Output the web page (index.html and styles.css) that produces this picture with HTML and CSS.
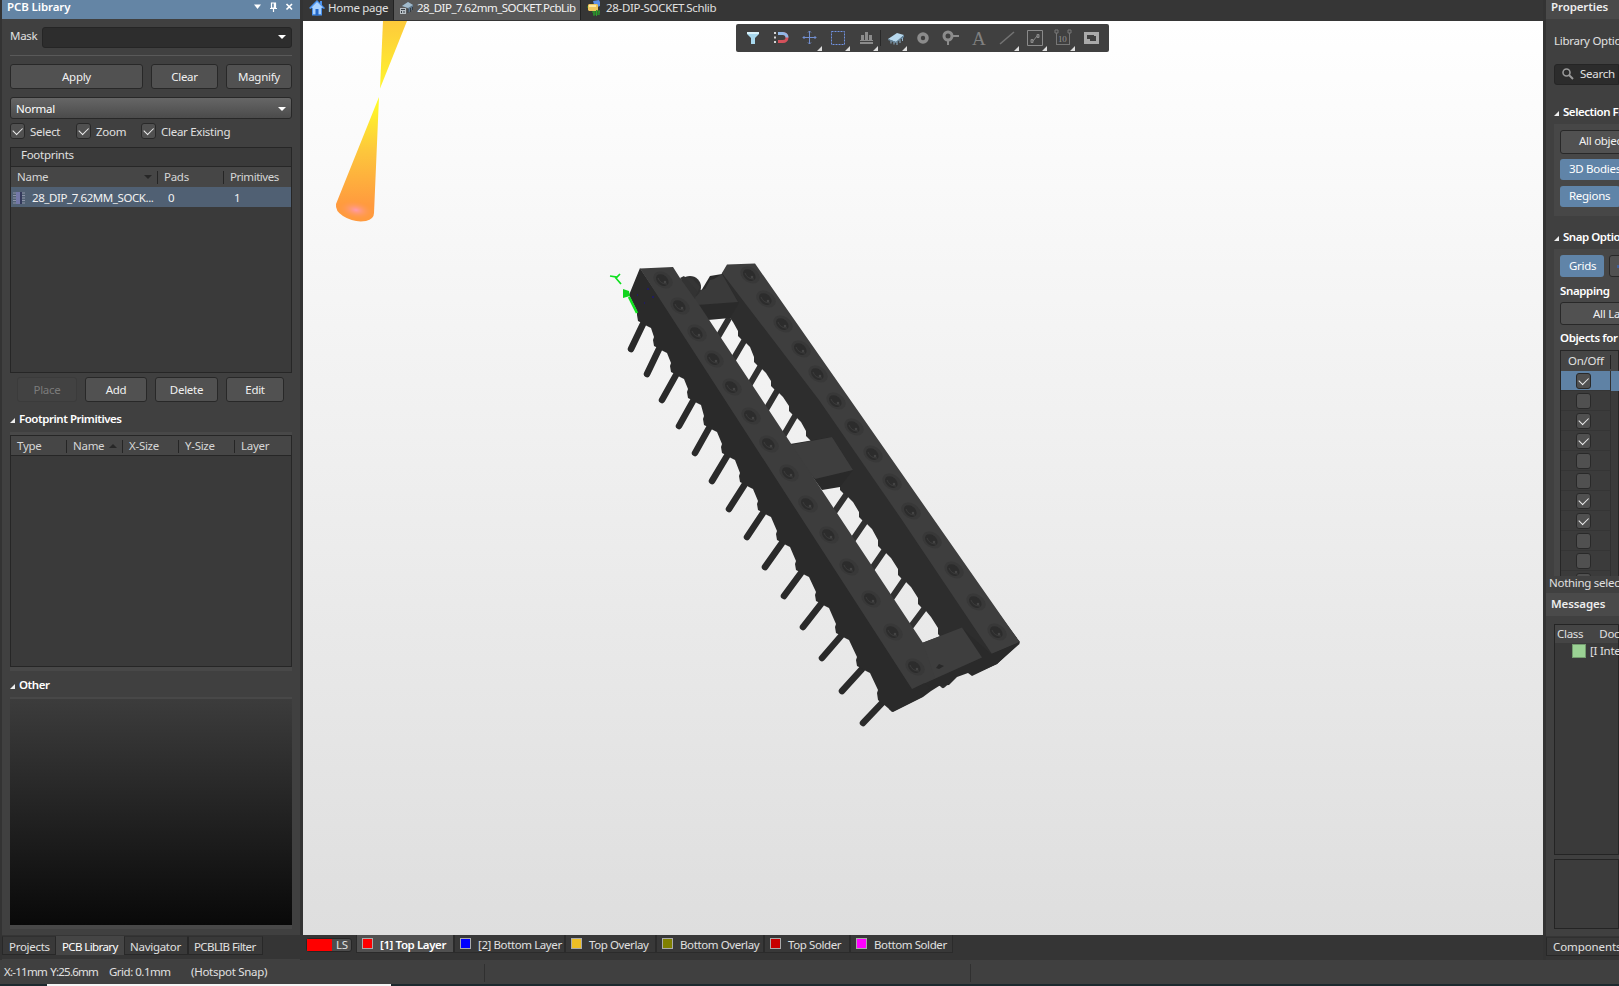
FILE: index.html
```
<!DOCTYPE html>
<html lang="en">
<head>
<meta charset="utf-8">
<title>PCB Library</title>
<link rel="stylesheet" href="styles.css">
</head>
<body>
<div class="app">
<div class="workspace">
  <aside class="library">
    <header class="panel-title active"><span class="grow">PCB Library</span>
      <svg width="39" height="12" viewBox="0 0 39 12"><path d="M0 3.500h7L3.500 8z" fill="#fff"/><path d="M17.500 2h4v5h-4zM16 7.500h7M19.500 7.500v3.500" fill="none" stroke="#fff" stroke-width="1.200"/><path d="M20.500 2v5" stroke="#fff" stroke-width="1.500"/><path d="M32.500 3l5.500 5.500M38 3l-5.500 5.500" stroke="#fff" stroke-width="1.700"/></svg>
    </header>
    <div class="mask-row"><span>Mask</span><div class="mask-input"><i class="arrow"></i></div></div>
    <div class="buttons main-buttons"><div class="btn">Apply</div><div class="btn">Clear</div><div class="btn">Magnify</div></div>
    <div class="combo"><span class="grow">Normal</span><i class="arrow"></i></div>
    <div class="checks">
      <span class="check on"></span><span class="l1">Select</span>
      <span class="check on"></span><span class="l2">Zoom</span>
      <span class="check on"></span><span>Clear Existing</span>
    </div>
    <div class="table footprints">
      <div class="caption">Footprints</div>
      <div class="thead fp-cols"><span>Name<i class="sort"></i></span><span>Pads</span><span>Primitives</span></div>
      <div class="trow fp-cols"><span class="fp-name"><svg width="12" height="14" viewBox="0 0 12 14"><path d="M0 2h3M0 4.500h3M0 7h3M0 9.500h3M0 12h3M9 2h3M9 4.500h3M9 7h3M9 9.500h3M9 12h3" stroke="#8c93a8"/><path d="M3 1h5v12H3z" fill="#7478a8"/><path d="M7 1h2v12H7z" fill="#343a5c"/></svg>28_DIP_7.62MM_SOCK...</span><span>0</span><span>1</span></div>
    </div>
    <div class="buttons edit-buttons"><div class="btn off">Place</div><div class="btn">Add</div><div class="btn">Delete</div><div class="btn">Edit</div></div>
    <h2 class="section s-prim"><i class="tri"></i>Footprint Primitives</h2>
    <div class="table primitives"><div class="thead pr-cols"><span>Type</span><span>Name<i class="sort up"></i></span><span>X-Size</span><span>Y-Size</span><span>Layer</span></div></div>
    <h2 class="section s-other"><i class="tri"></i>Other</h2>
    <div class="preview"></div>
    <nav class="panel-tabs"><span>Projects</span><span class="current">PCB Library</span><span>Navigator</span><span>PCBLIB Filter</span></nav>
  </aside>

  <main class="editor">
    <nav class="doc-tabs">
      <span class="doc"><svg width="16" height="16" viewBox="0 0 16 16"><path d="M8 0L0 8l1.500 1L3 8v7.500h10V8l2 1 1-1-3-3V1h-2v2z" fill="#4b93ee"/><path d="M8 2L2.500 7.500 4 8v6h8V8l2-.5z" fill="#a9d2ff"/><path d="M6.500 9h3v6.500h-3z" fill="#2468c9"/></svg>Home page</span>
      <span class="doc current"><svg width="14" height="14" viewBox="0 0 14 14"><path d="M2 5l6-4 5 3v4l-5 4V7z" fill="#5b7388"/><path d="M2 5l6-4 5 3-5 3z" fill="#a1bacb"/><path d="M0 7h6v6H0z" fill="#b8bfc4"/><path d="M1 8.500h4M1.500 10v2M4 10v2M8 8v4M10.500 7v4M12.500 6v3" stroke="#343b42"/></svg>28_DIP_7.62mm_SOCKET.PcbLib</span>
      <span class="doc"><svg width="14" height="16" viewBox="0 0 14 16"><path d="M6 1l6-1 1 2v4l-5 2z" fill="#5b8fe8"/><path d="M2 4h8l1 1v5l-1 1H2L1 10V5z" fill="#efc65c"/><path d="M2 5h7v2H2z" fill="#ffe7a0"/><path d="M5 12h8M6 14h6M7 11v5M9.500 10v6M12 10v5M0 7h1" stroke="#2ba32b"/></svg>28-DIP-SOCKET.Schlib</span>
    </nav>
    <div class="viewport">
      <svg class="scene" viewBox="303 21 1240 914">
        <defs>
          <linearGradient id="bg" x1="0" y1="0" x2="0" y2="1"><stop offset="0" stop-color="#fff"/><stop offset="1" stop-color="#dedede"/></linearGradient>
          <linearGradient id="c1" gradientUnits="userSpaceOnUse" x1="0" y1="21" x2="0" y2="88"><stop offset="0" stop-color="#fdca3b"/><stop offset="1" stop-color="#fff42e"/></linearGradient>
          <linearGradient id="c2" gradientUnits="userSpaceOnUse" x1="0" y1="98" x2="0" y2="205"><stop offset="0" stop-color="#ffff26"/><stop offset=".5" stop-color="#fdc63c"/><stop offset="1" stop-color="#ff9a3e"/></linearGradient>
          <radialGradient id="c3"><stop offset="0" stop-color="#ff9aae"/><stop offset="1" stop-color="#ff9a4a" stop-opacity="0"/></radialGradient>
          <g id="h"><ellipse rx="10.500" ry="7.500" fill="#383838" transform="rotate(32)"/><ellipse cx="-.5" cy=".5" rx="7" ry="5" fill="#2c2c2c" transform="rotate(40)"/><path d="M-5-2Q-3 4 4 4" stroke="#3d3d3d" fill="none"/><circle cx="2" cy="2" r="1.300" fill="#444"/></g>
        </defs>
        <path d="M303 21h1240v914H303z" fill="url(#bg)"/>
        <path d="M383 21h24L380 88.500z" fill="url(#c1)"/>
        <path d="M379 97L336 204q-1 7 7 12 11 7 23 5 8-2 8-8z" fill="url(#c2)"/>
        <ellipse cx="356" cy="210" rx="17" ry="9" fill="url(#c3)" transform="rotate(10 356 210)"/>
        <!-- Pins under the far rail -->
        <path d="M728 320l-20 34M744 341l-20 34M760 367l-20 34M777 391l-20 34M795 416l-20 34M846 495l-22 32M865 522l-22 32M884 551l-22 32M904 580l-22 32M924 609l-24 32M954 674l-11 11" stroke="#303030" stroke-width="6" stroke-linecap="round"/>
        <!-- Far rail side and top -->
        <path d="M722 273L708 308l16 8 6 2 3 4 5 9v5l4 4 4 3 4 4 4 10v5l4 4 4 3 4 4 5 8v5l4 4 4 3 4 4 6 9v5l4 4 4 3 4 4 5 9v5l4 4L822 459 840 485v5l4 4 4 3 5 5 6 10v5l4 4 4 3 5 5 6 11v6l4 4 4 3 5 5 7 11v6l4 4 4 3 5 5 7 11v6l4 4 4 3 5 6 7 11v6l34 41 25-11 23-22L740 266z" fill="#2d2d2d"/>
        <path d="M722 273l5-8.500 28-1L1019.500 642 992 654 900 517 819 400z" fill="#3e3e3e"/>
        <!-- Cross bars -->
        <path d="M701 291l9-15 12-2 17 29-9 15-22 2-12-18z" fill="#2a2a2a"/><path d="M700 290l5-1 5-9 4-1 8-5 16 28-41 3-8-9z" fill="#3a3a3a"/>
        <path d="M790 444l42-7 21 33-13 17-18 3-8-11z" fill="#292929"/><path d="M790 445l42-8 21 33-38 9-30-32z" fill="#3e3e3e"/>
        <path d="M922 643l40-15 29 26 28.500-12v2L997 664l-25 12-4-3-11 4-8 8-10 1-8 5-8 6-30 15-4-3 22-42z" fill="#2a2a2a"/><path d="M922 643l40-15.500 20 30L912 689l-15-26z" fill="#3e3e3e"/><path d="M936 668l3-4 5 2-5 3z" fill="#292929"/>
        <circle cx="690" cy="287" r="11" fill="#303030"/><path d="M683 279q5-3 10 0l7 8-4 8z" fill="#353535"/>
        <!-- Pins of the near rail -->
        <path d="M643 324l-12 25M659 349l-12 25M676 375l-14 25M693 401l-14 25M709 428l-14 25M727 456l-15 25M745 484l-16 25M763 513l-16 24M782 543l-17 24M801 573l-17 23M821 604l-18 23M841 636l-19 22M862 669l-20 22M883 702l-20 21" stroke="#2a2a2a" stroke-width="6.500" stroke-linecap="round"/>
        <!-- Near rail side with scalloped foot -->
        <path d="M640 268L629 295l8 16 0 4 1 6 4 2 5 3 4 2L654 337l-1 3 1 6 4 2 5 3 4 2L671 363l-1 3 1 6 4 2 5 3 4 2L688 389l-1 3 1 6 4 2 5 3 4 2L704 416l-1 3 1 6 4 2 5 3 4 2L722 444l-1 3 1 6 4 2 5 3 4 2L740 473l-1 3 1 6 4 2 5 3 4 2L758 501l-1 3 1 6 4 2 5 3 4 2L777 531l-1 3 1 6 4 2 5 3 4 2L796 561l-1 3 1 6 4 2 5 3 4 2L816 592l-1 3 1 6 4 2 5 3 4 2L836 624l-1 3 1 6 4 2 5 3 4 2L857 657l-1 3 1 6 4 2 5 3 4 2L878 690l-1 3 1 7 4 3 6 5 4 4 30-15 8-10-17-11z" fill="#2a2a2a"/>
        <path d="M640 268.500l33-1.500 7 11 6 7L923 643l12 35-23 11z" fill="#3d3d3d"/><path d="M680 278l4-2 13 15-2 8z" fill="#333"/>
        <use href="#h" x="663" y="280"/><use href="#h" x="680" y="306"/><use href="#h" x="697" y="333"/><use href="#h" x="714" y="359"/><use href="#h" x="732" y="387"/><use href="#h" x="751" y="416"/><use href="#h" x="769" y="444"/><use href="#h" x="789" y="473"/><use href="#h" x="808" y="504"/><use href="#h" x="829" y="535"/><use href="#h" x="849" y="567"/><use href="#h" x="871" y="599"/><use href="#h" x="893" y="632"/><use href="#h" x="915" y="667"/>
        <use href="#h" x="750" y="275"/><use href="#h" x="766" y="299"/><use href="#h" x="783" y="324"/><use href="#h" x="801" y="349"/><use href="#h" x="818" y="374"/><use href="#h" x="836" y="401"/><use href="#h" x="854" y="427"/><use href="#h" x="873" y="454"/><use href="#h" x="892" y="482"/><use href="#h" x="911" y="511"/><use href="#h" x="932" y="540"/><use href="#h" x="954" y="570"/><use href="#h" x="976" y="602"/><use href="#h" x="997" y="632"/>
        <!-- Y axis marker -->
        <path d="M610 276l7 1 3-3M615 277l6 7" stroke="#0fe01f" stroke-width="1.700" fill="none"/><path d="M623 289l6 2 1 5-7 2z" fill="#10d41c"/><path d="M629 297l8 16" stroke="#10e61e" stroke-width="2.500"/><path d="M647 289h2M652 297h2M637 295h1M644 303h1" stroke="#201c60" stroke-width="2"/>
      </svg>
      <div class="toolbar">
        <svg width="373" height="28" viewBox="0 0 373 28">
          <path d="M11 8h12v2l-4 4v6h-4v-6l-4-4z" fill="#a8d8ee"/><path d="M11 8h12v2H11z" fill="#d9f1fb"/>
          <path d="M42 9.500h5a4 4 0 010 8h-5" fill="none" stroke="#d4515b" stroke-width="3"/><path d="M42 9.500h5a4 4 0 014 4" fill="none" stroke="#91b7e6" stroke-width="3"/><path d="M39 8v2M39 12.500v2M39 17v2" stroke="#d6d6d6" stroke-width="2"/>
          <path d="M67 13.500h13M73.500 7v13" stroke="#728fd1"/><path d="M72 8.500l1.500-1.500L75 8.500M72 18.500l1.500 1.500 1.500-1.500M68.500 12L67 13.500l1.500 1.500M78.500 12l1.500 1.500-1.500 1.500" stroke="#728fd1" fill="none"/>
          <path d="M95.500 7.500h13v13h-13z" fill="none" stroke="#7193e2" stroke-dasharray="2 1"/>
          <path d="M124 19h13" stroke="#8b8b8b" stroke-width="2"/><path d="M125 11h3v6h-3zM129 8h3v9h-3zM133 11h3v6h-3z" fill="#8b8b8b"/><path d="M124 16.500h13" stroke="#8b8b8b"/>
          <path d="M144.500 6v16" stroke="#282828"/>
          <path d="M152 15l9-6 7 2-8 7z" fill="#b7d8ed"/><path d="M152 15l8 3 8-7v2l-8 6-8-3z" fill="#6588a2"/><path d="M155 17v2.500M158 18v2.500M161 18v3M164 16v3M166.500 14v3" stroke="#8fb0c8"/>
          <circle cx="187" cy="14" r="4" fill="none" stroke="#8c8c8c" stroke-width="3.600"/>
          <circle cx="212" cy="12" r="4" fill="none" stroke="#8c8c8c" stroke-width="3"/><path d="M216 12h7M212 16v5" stroke="#8c8c8c" stroke-width="2"/>
          <path d="M264 20l14-12" stroke="#737373" stroke-width="1.600"/>
          <path d="M291.500 6.500h15v15h-15z" fill="none" stroke="#8a8a8a"/><path d="M295 17h2l4-5h2M295 15.500h2v3h-2zM301 10.500h2v3h-2z" fill="none" stroke="#8a8a8a"/>
          <path d="M320.500 9v12M333.500 9v12" stroke="#777"/><path d="M320.500 20.500h13" stroke="#777"/><path d="M319 6h3v3h-3zM332 6h3v3h-3z" fill="none" stroke="#777"/>
          <path d="M349.500 9.500h12v9h-12z" fill="none" stroke="#aaa" stroke-width="3"/><path d="M350 15h4v4h-4zM358 9h4v3h-4z" fill="#aaa"/>
          <path d="M86 22v5h-5zM114 22v5h-5zM142 22v5h-5zM171 22v5h-5zM283 22v5h-5zM311 22v5h-5zM339 22v5h-5z" fill="#ddd"/>
          <text class="glyph-a" x="236" y="21">A</text><text class="glyph-n" x="322" y="18">10</text>
        </svg>
      </div>
    </div>
    <nav class="layers">
      <span class="ls"><i></i><b>LS</b></span>
      <span class="layer current w1"><i class="sw red"></i>[1] Top Layer</span>
      <span class="layer w2"><i class="sw blue"></i>[2] Bottom Layer</span>
      <span class="layer w3"><i class="sw gold"></i>Top Overlay</span>
      <span class="layer w4"><i class="sw olive"></i>Bottom Overlay</span>
      <span class="layer w5"><i class="sw dred"></i>Top Solder</span>
      <span class="layer w6"><i class="sw mag"></i>Bottom Solder</span>
    </nav>
  </main>

  <aside class="properties">
    <header class="panel-title">Properties</header>
    <div class="lib-options">Library Options</div>
    <div class="search"><svg width="12" height="12" viewBox="0 0 12 12"><circle cx="4.500" cy="4.500" r="3.500" fill="none" stroke="#999" stroke-width="1.600"/><path d="M7 7l4 4" stroke="#999" stroke-width="2"/></svg>Search</div>
    <h2 class="section s-filter"><i class="tri"></i>Selection Filter</h2>
    <div class="group filter"><div class="btn all">All objects</div><div class="chip">3D Bodies</div><div class="chip">Regions</div></div>
    <h2 class="section s-snap"><i class="tri"></i>Snap Options</h2>
    <div class="group snap">
      <div class="snap-row"><div class="chip grids">Grids</div><div class="btn guides"><i></i></div></div>
      <strong>Snapping</strong>
      <div class="btn layers-all">All Layers</div>
      <strong class="objects">Objects for snapping</strong>
      <div class="snap-table">
        <div class="snap-head"><span>On/Off</span><i></i></div>
        <div class="snap-line sel"><i class="check on"></i></div><div class="snap-line"><i class="check"></i></div><div class="snap-line"><i class="check on"></i></div><div class="snap-line"><i class="check on"></i></div><div class="snap-line"><i class="check"></i></div><div class="snap-line"><i class="check"></i></div><div class="snap-line"><i class="check on"></i></div><div class="snap-line"><i class="check on"></i></div><div class="snap-line"><i class="check"></i></div><div class="snap-line"><i class="check"></i></div><div class="snap-line"><i class="check"></i></div>
      </div>
    </div>
    <div class="nothing">Nothing selected</div>
    <header class="panel-title messages-title">Messages</header>
    <div class="messages"><div class="msg-head"><span>Class</span><span>Document</span></div><div class="msg-row"><i></i><span class="tag">[I</span><span>Integrated</span></div></div>
    <div class="details"></div>
    <nav class="panel-tabs right"><span>Components</span></nav>
  </aside>
</div>
<footer class="status"><span class="xy">X:-11mm Y:25.6mm</span><span class="grid">Grid: 0.1mm</span><span class="hot">(Hotspot Snap)</span><i></i><i class="second"></i></footer>
<div class="edge"><i></i></div>
</div>
</body>
</html>
```
FILE: styles.css
```
* { box-sizing: border-box; }
body { margin: 0; font: 11.5px/16px "Noto Sans", "Open Sans", sans-serif; letter-spacing: -0.28px; color: #e0e0e0; background: #353535; overflow: hidden; }
.app { width: 1619px; height: 986px; display: flex; flex-direction: column; white-space: nowrap; overflow: hidden; }
.workspace { height: 960px; display: grid; grid-template-columns: 303px 1240px 76px; }
.library { display: flex; flex-direction: column; background: #404040; border-left: 2px solid #333; border-right: 3px solid #333; height: 960px; padding: 0 8px; }
.grow { flex: 1; }
.panel-title { height: 19px; font-weight: 600; line-height: 13px; letter-spacing: -0.1px; color: #eee; background: #4a4a4a; padding-left: 5px; flex: none; }
.panel-title.active { display: flex; margin: 0 -8px; background: #6485a5; padding-right: 7px; color: #fff; }
.panel-title svg { margin-top: 1px; }
.mask-row { display: flex; justify-content: space-between; align-items: center; height: 37px; border-bottom: 1px solid #595959; }
.mask-row span { margin-top: -2px; }
.mask-input { width: 250px; height: 21px; background: #2d2d2d; border: 1px solid #252525; border-radius: 3px; display: flex; justify-content: flex-end; align-items: center; padding-right: 5px; }
.arrow { width: 0; border: 4px solid transparent; border-top-color: #fff; border-bottom: 0; }
.buttons { display: flex; }
.btn { height: 25px; line-height: 23px; background: #515151; border: 1px solid #282828; border-radius: 3px; text-align: center; color: #f0f0f0; flex: none; }
.main-buttons { margin-top: 8px; gap: 8px; }
.main-buttons .btn { width: 67px; }
.main-buttons .btn:first-child { width: 133px; }
.main-buttons .btn:last-child { width: 66px; }
.combo { height: 22px; margin-top: 8px; flex: none; display: flex; align-items: center; padding: 1px 5px 0; border: 1px solid #282828; border-radius: 3px; background: linear-gradient(#666, #4b4b4b); color: #fff; }
.checks { height: 16px; margin-top: 4px; display: flex; align-items: center; }
.check { width: 15px; height: 16px; flex: none; border: 1px solid #292929; border-radius: 3px; background: #505050; display: flex; justify-content: center; padding-top: 2px; }
.check.on::before { content: ""; width: 8px; height: 4.500px; margin-top: 1px; border: solid #eee; border-width: 0 0 1.500px 1.500px; transform: rotate(-45deg); }
.checks span:not(.check) { margin-left: 5px; padding-top: 2px; }
.l1 { width: 46px; } .l2 { width: 45px; }
.table { border: 1px solid #262626; background: #3a3a3a; flex: none; }
.footprints { margin-top: 8px; height: 226px; }
.caption { height: 19px; padding-left: 10px; line-height: 14px; border-bottom: 1px solid #272727; }
.thead { height: 20px; line-height: 20px; background: #464646; color: #d6d6d6; }
.fp-cols { display: grid; grid-template-columns: 146px 66px 68px; }
.thead span { position: relative; padding-left: 7px; }
.thead span + span::before { content: ""; position: absolute; left: 0; top: 4px; height: 13px; border-left: 1px solid #252525; }
.fp-cols span:nth-child(1) { padding-left: 6px; }
.fp-cols span:nth-child(3) { letter-spacing: -0.45px; }
.sort { position: absolute; right: 5px; top: 8px; border: 4px solid transparent; border-top-color: #272727; border-bottom: 0; }
.sort.up { border: 4px solid transparent; border-bottom-color: #272727; border-top: 0; }
.trow { height: 20px; line-height: 22px; background: #506073; color: #f2f2f2; }
.trow span { padding-left: 11px; }
.fp-cols .fp-name.fp-name { padding-left: 2px; display: flex; align-items: center; gap: 7px; letter-spacing: -0.42px; }
.fp-name svg { flex: none; }
.edit-buttons { margin: 4px 0 0 7px; gap: 8px; }
.edit-buttons .btn { width: 62px; }
.edit-buttons .btn:nth-child(3) { width: 63px; }
.edit-buttons .btn:first-child { width: 60px; }
.edit-buttons .btn:last-child { width: 58px; }
.edit-buttons .btn.off { background: #424242; border-color: #3b3b3b; color: #7b7b7b; }
.section { margin: 0; font-size: 11.5px; letter-spacing: -0.46px; font-weight: 600; height: 20px; line-height: 20px; color: #fff; display: flex; align-items: center; flex: none; }
.tri { width: 0; height: 0; border-left: 5px solid transparent; border-bottom: 5px solid #eee; margin-right: 4px; margin-top: 2px; }
.s-prim { margin-top: 7px; }
.primitives { margin-top: 6px; height: 232px; box-shadow: 0 4px #484848, 0 -3px #484848; }
.pr-cols { display: grid; grid-template-columns: 55px 56px 56px 56px 57px; border-bottom: 1px solid #262626; }
.pr-cols span { padding-left: 7px; }
.pr-cols span:first-child { padding-left: 6px; }
.s-other { margin-top: 8px; }
.preview { height: 226px; margin-top: 4px; flex: none; background: linear-gradient(#3c3c3c, #090909); box-shadow: 0 4px #484848, 0 -2px #484848; }
.panel-tabs { display: flex; height: 24px; margin: 10px -11px 0 -8px; background: #353535; flex: none; }
.panel-tabs span { height: 19px; margin-top: 1px; line-height: 20px; border: 1px solid #282828; border-top-color: #303030; padding: 0 6px; background: #393939; }
.panel-tabs span:nth-child(1) { width: 54px; }
.panel-tabs span:nth-child(3) { width: 64px; padding-left: 5px; }
.panel-tabs span:nth-child(4) { width: 75px; letter-spacing: -0.6px; padding-left: 5px; }
.panel-tabs .current { background: #454545; border-color: #454545; color: #fff; width: 68px; letter-spacing: -0.6px; padding: 0 5px; }
.editor { display: flex; flex-direction: column; min-width: 0; }
.doc-tabs { height: 21px; display: flex; background: #363636; }
.doc { height: 20px; display: flex; align-items: center; gap: 3px; padding: 0 6px; line-height: 16px; padding-bottom: 4px; }
.doc:first-child { width: 90px; }
.doc svg { flex: none; }
.doc.current { background: #595959; color: #f2f2f2; border-right: 1px solid #222; border-left: 1px solid #222; width: 188px; letter-spacing: -0.52px; }
.doc:last-child { letter-spacing: -0.32px; gap: 5px; }
.viewport { position: relative; height: 914px; }
.scene { display: block; width: 1240px; height: 914px; }
.toolbar { position: absolute; left: 433px; top: 3px; width: 373px; height: 28px; background: #404040; border-radius: 2px; }
.toolbar svg { display: block; }
.glyph-a { font: 19px "Liberation Serif", serif; fill: #808080; }
.glyph-n { font: 9px "Liberation Serif", serif; fill: #929292; }
.layers { display: flex; height: 25px; background: #353535; padding-left: 3px; }
.ls { width: 46px; height: 14px; margin: 3px 4px 0 0; display: flex; background: #4d4d4d; border: 1px solid #262626; border-radius: 3px; }
.ls i { width: 25px; background: #f00; } .ls b { font-weight: 400; line-height: 12px; margin-left: 4px; }
.layer { height: 18px; line-height: 18px; display: flex; align-items: center; padding: 2px 0 0 5px; gap: 7px; border: 1px solid #2b2b2b; border-top: 0; background: #383838; letter-spacing: -0.4px; }
.layer.current { background: #505050; font-weight: 600; color: #fff; }
.sw { width: 11px; height: 11px; margin-top: -2px; border: 1px solid #aaa; flex: none; }
.red { background: #f00; } .blue { background: #00f; } .gold { background: #edbe25; } .olive { background: #808000; } .dred { background: #c80000; } .mag { background: #f0f; }
.w1 { width: 98px; } .w2 { width: 111px; } .w3 { width: 91px; } .w4 { width: 108px; } .w5 { width: 86px; } .w6 { width: 103px; }
.properties { display: flex; flex-direction: column; background: #404040; border-left: 3px solid #333; height: 960px; overflow: hidden; padding-left: 8px; }
.properties .panel-title { margin-left: -8px; }
.lib-options { height: 20px; margin-top: 13px; line-height: 17px; flex: none; }
.search { height: 21px; margin-top: 12px; flex: none; background: #2c2c2c; border: 1px solid #252525; border-radius: 3px 0 0 3px; display: flex; align-items: center; gap: 6px; padding: 0 0 1px 7px; }
.s-filter { margin-top: 17px; }
.group { background: #474747; padding-left: 6px; flex: none; }
.filter { height: 92px; margin-top: 2px; padding-top: 6px; }
.chip { height: 22px; line-height: 21px; border-radius: 3px; background: #6084a8; color: #fff; padding-left: 9px; }
.all, .layers-all { width: 100px; text-align: left; padding-left: 18px; }
.filter .all { height: 24px; line-height: 20px; }
.filter .chip { height: 21px; line-height: 20px; width: 60px; }
.filter .chip + .chip { margin-top: 6px; }
.filter .all + .chip { width: 90px; margin-top: 5px; }
.s-snap { margin-top: 11px; }
.snap { height: 327px; margin-top: 2px; padding-top: 6px; overflow: hidden; display: flex; flex-direction: column; }
.snap strong { font-weight: 600; color: #fff; height: 24px; line-height: 28px; flex: none; letter-spacing: -0.38px; }
.snap-row { display: flex; gap: 5px; } .grids { width: 44px; } .guides { width: 40px; height: 22px; }
.grids { flex: none; }
.guides i { display: block; width: 4px; height: 3px; margin: 9px 0 0 7px; background: #3f5f98; }
.snap .layers-all { padding-left: 32px; margin-top: 1px; height: 23px; line-height: 21px; }
.snap .objects { line-height: 25px; }
.snap-table { border: 1px solid #262626; background: #3b3b3b; margin-top: 1px; height: 263px; flex: none; }
.snap-head { height: 20px; line-height: 20px; padding-left: 7px; background: #454545; display: flex; }
.snap-head i { border-left: 1px solid #222; height: 14px; margin: 4px 0 0 6px; }
.snap-line { height: 20px; padding: 2px 0 0 15px; border-bottom: 1px solid #353535; width: 50px; border-right: 1px solid #303030; }
.snap-line.sel { background: #5f82a5; box-shadow: 20px 0 #5f82a5; }
.nothing { margin-left: -5px; height: 17px; line-height: 13px; flex: none; }
.properties .messages-title { height: 23px; line-height: 22px; }
.messages { height: 231px; margin-top: 8px; border: 1px solid #242424; background: #3a3a3a; flex: none; }
.msg-head { height: 18px; background: #454545; line-height: 18px; display: flex; gap: 16px; padding-left: 2px; }
.msg-row { display: flex; line-height: 16px; padding-left: 17px; }
.msg-row i { width: 14px; height: 14px; background: #9bd294; border: 1px solid #739c6e; margin: 1px 4px 0 0; flex: none; }
.tag { width: 10px; flex: none; }
.details { height: 70px; margin-top: 4px; flex: none; border: 1px solid #242424; background: #3c3c3c; }
.panel-tabs.right { margin: auto 0 0 -8px; }
.panel-tabs.right span { width: 90px; line-height: 18px; letter-spacing: -0.1px; }
.status { height: 24px; background: #404040; display: flex; line-height: 24px; padding-left: 4px; }
.status span { flex: none; }
.xy { width: 105px; letter-spacing: -0.75px; word-spacing: 1px; } .grid { width: 82px; letter-spacing: -0.5px; } .hot { width: 293px; }
.status i { height: 18px; margin-top: 4px; border-left: 1px solid #303030; width: 486px; }
.edge { height: 2px; background: #1d292e; padding-left: 47px; }
.edge i { display: block; width: 344px; height: 2px; background: #f4f4f4; }
```
